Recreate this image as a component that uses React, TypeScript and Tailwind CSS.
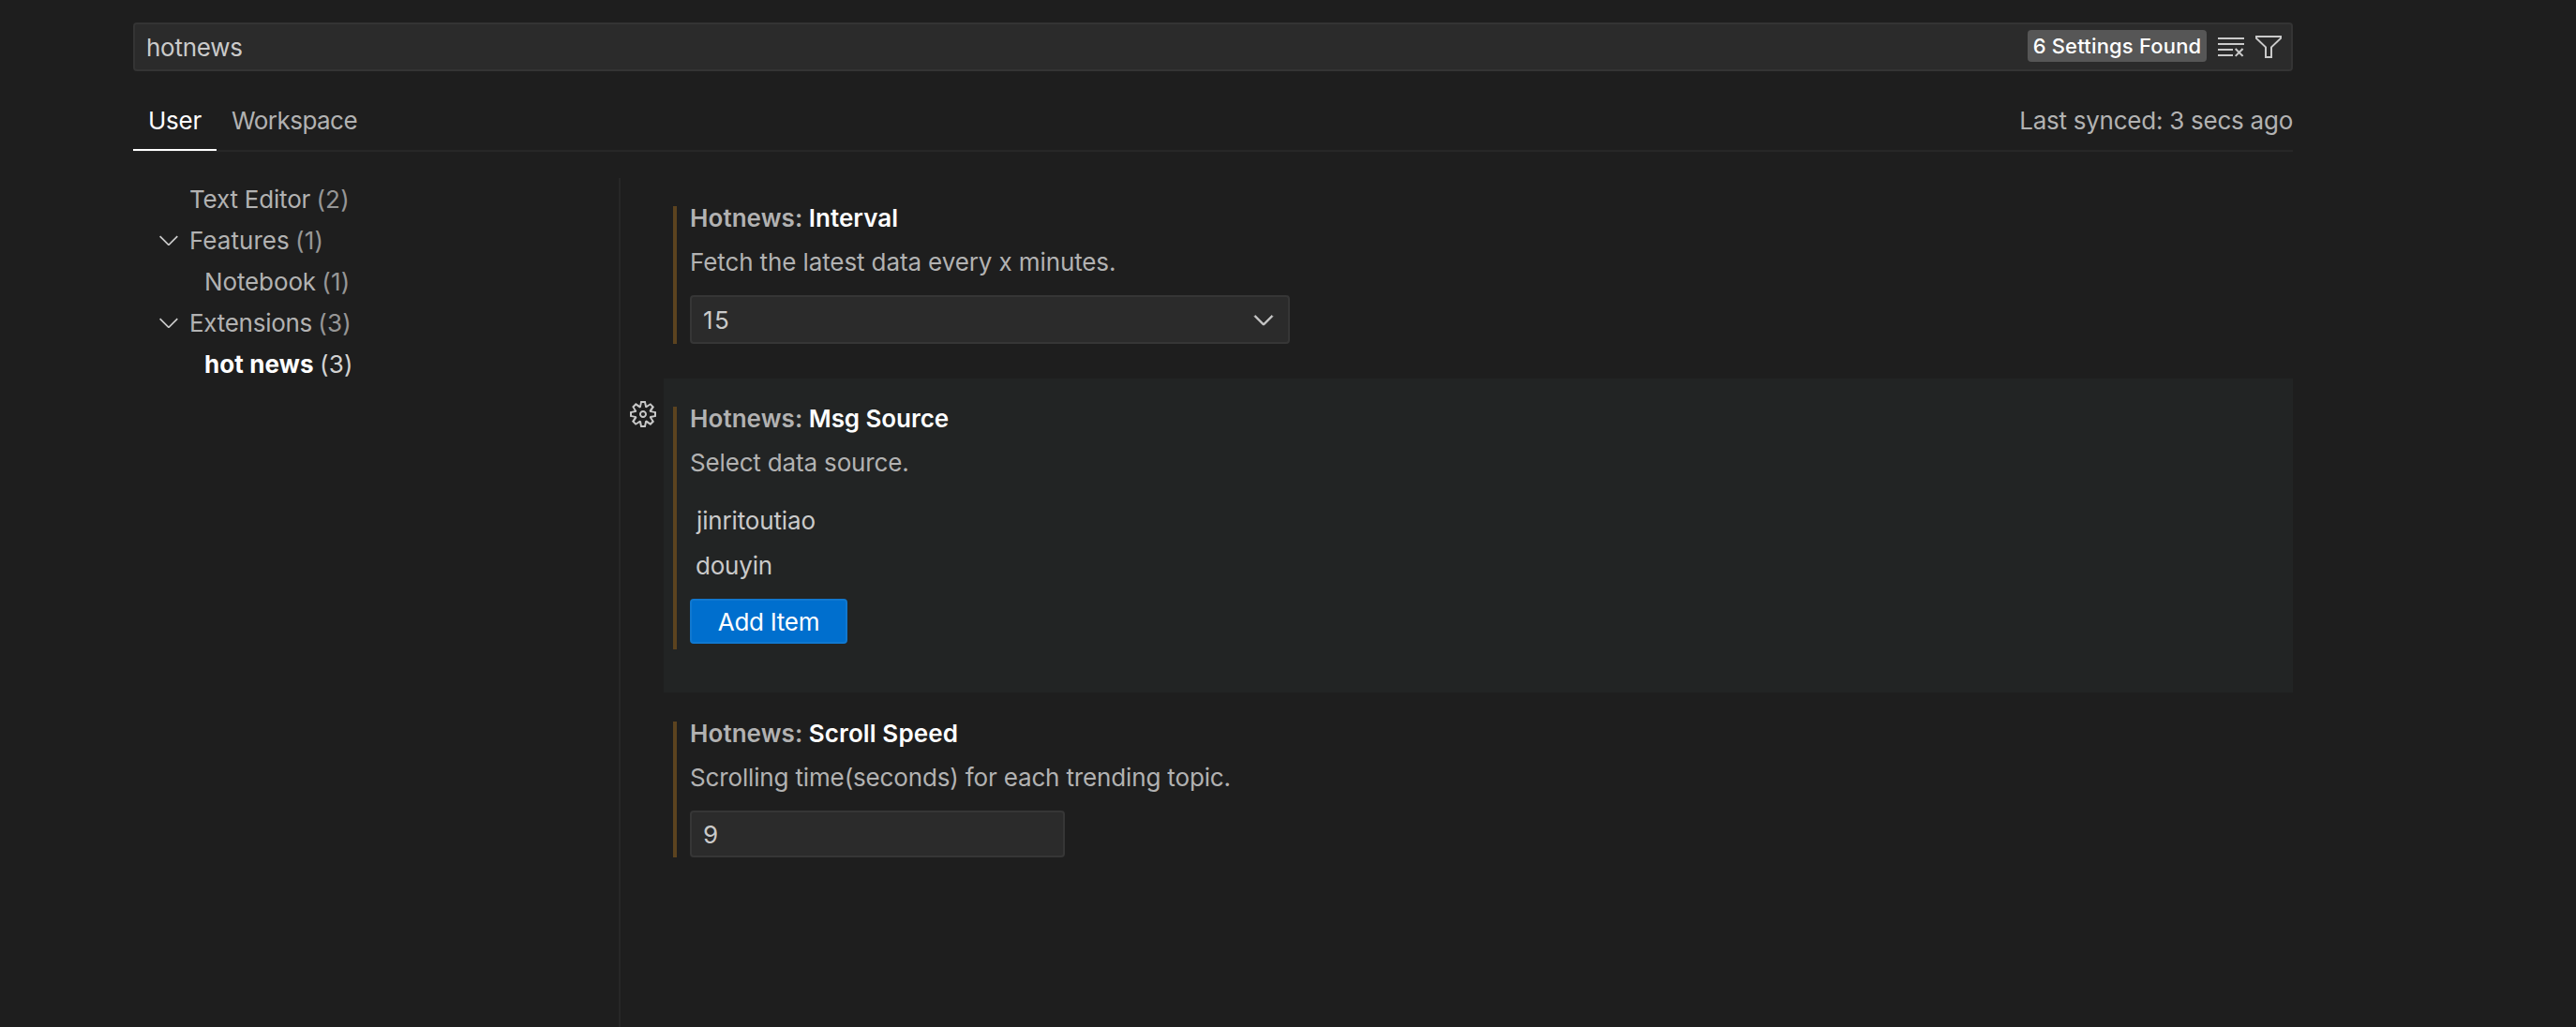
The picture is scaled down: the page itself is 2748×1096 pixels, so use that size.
import type { ReactNode } from "react";

function Icon({ d, className = "" }: { d: string; className?: string }) {
  return (
    <svg viewBox="0 0 16 16" className={`block size-8 shrink-0 ${className}`} fill="currentColor" fillRule="evenodd" clipRule="evenodd">
      <path d={d} />
    </svg>
  );
}

const CHEVRON = "M7.976 10.072l4.357-4.357.62.618L8.284 11h-.618L3 6.333l.619-.618 4.357 4.357z";
const CLEAR_ALL =
  "M10 12.6l.7.7 1.6-1.6 1.6 1.6.8-.7L13 11l1.7-1.6-.8-.8-1.6 1.7-1.6-1.7-.7.8 1.6 1.6-1.6 1.6zM1 4h14V3H1v1zm0 3h14V6H1v1zm8 2.5V9H1v1h8v-.5zM9 13v-1H1v1h8z";
const FILTER = "M15 2v1.67l-5 4.759V14H6V8.429l-5-4.76V2h14zM7 8v5h2V8l5-4.76V3H2v.24L7 8z";
const GEAR =
  "M9.1 4.4L8.6 2H7.4l-.5 2.4-.7.3-2-1.3-.9.8 1.3 2-.2.7-2.4.5v1.2l2.4.5.3.8-1.3 2 .8.8 2-1.3.8.3.4 2.3h1.2l.5-2.4.8-.3 2 1.3.8-.8-1.3-2 .3-.8 2.3-.4V7.4l-2.4-.5-.3-.8 1.3-2-.8-.8-2 1.3-.7-.2zM9.4 1l.5 2.4L12 2.1l2 2-1.4 2.1 2.4.4v2.8l-2.4.5L14 12l-2 2-2.1-1.4-.5 2.4H6.6l-.5-2.4L4 13.9l-2-2 1.4-2.1L1 9.4V6.6l2.4-.5L2.1 4l2-2 2.1 1.4.4-2.4h2.8zm.6 7c0 1.1-.9 2-2 2s-2-.9-2-2 .9-2 2-2 2 .9 2 2zM8 9c.6 0 1-.4 1-1s-.4-1-1-1-1 .4-1 1 .4 1 1 1z";

const tree = [
  { label: "Text Editor", count: 2, tracking: "tracking-[-0.2px]", indent: "pl-[60px]", open: false, active: false },
  { label: "Features", count: 1, tracking: "tracking-[0.04px]", indent: "pl-[22px]", open: true, active: false },
  { label: "Notebook", count: 1, tracking: "tracking-[-0.12px]", indent: "pl-[76px]", open: false, active: false },
  { label: "Extensions", count: 3, tracking: "tracking-[-0.28px]", indent: "pl-[22px]", open: true, active: false },
  { label: "hot news", count: 3, tracking: "tracking-[0.11px]", indent: "pl-[76px]", open: false, active: true },
];

function Setting({
  name,
  nameTracking,
  description,
  tracking,
  height,
  focused = false,
  children,
}: {
  name: string;
  nameTracking: string;
  description: string;
  tracking: string;
  height: string;
  focused?: boolean;
  children: ReactNode;
}) {
  return (
    <div className={`flex ${height}`}>
      <div className="w-[46px] shrink-0 pl-2 pt-[22px] text-[#c8c8c8]">{focused && <Icon d={GEAR} />}</div>
      <div className={`flex grow items-start pl-[10px] pt-[30px] ${focused ? "bg-[#222424]" : ""}`}>
        <div className="flex border-l-4 border-[#5c431f] pl-[14px]">
          <div className="flex flex-col items-start">
            <h3 className="flex gap-[6.4px] font-semibold leading-[26px] text-white">
              <span className="tracking-[0.08px] text-[#b2b2b2]">Hotnews:</span>
              <span className={nameTracking}>{name}</span>
            </h3>
            <p className={`mt-[21px] leading-[26px] text-[#b2b2b2] ${tracking}`}>{description}</p>
            {children}
          </div>
        </div>
      </div>
    </div>
  );
}

export default function App() {
  return (
    <div className="h-[1096px] w-[2748px] overflow-hidden whitespace-nowrap bg-[#1e1e1e] pl-[142px] pt-6 font-['Inter',sans-serif] text-[26px] text-[#cacaca]">
      <div className="flex h-full w-[2304px] flex-col">
        <div className="flex h-[52px] shrink-0 items-center rounded-[4px] border-2 border-[#343434] bg-[#2b2b2b] pl-3 pr-2">
          <span className="grow pt-[2px] leading-[50px] tracking-[-0.26px]">hotnews</span>
          <span className="-mt-0.5 h-[34px] w-[191px] rounded-[4px] bg-[#565656] text-center text-[22px] font-medium leading-[34px] tracking-[0.18px] text-white">
            6 Settings Found
          </span>
          <Icon d={CLEAR_ALL} className="ml-[10px]" />
          <Icon d={FILTER} className="ml-2" />
        </div>

        <div className="mt-[22px] flex h-16 shrink-0 border-b-2 border-[#272727] leading-[62px] text-[#b2b2b2]">
          <div className="h-[63px] w-[89px] border-b-2 border-white pl-4 tracking-[-0.24px] text-white">User</div>
          <div className="pl-4 tracking-[-0.54px]">Workspace</div>
          <div className="ml-auto tracking-[-0.25px]">Last synced: 3 secs ago</div>
        </div>

        <div className="mt-7 flex grow">
          <div className="w-[518px] shrink-0 pt-px">
            {tree.map((t) => (
              <div key={t.label} className={`flex h-11 items-center leading-[44px] ${t.indent} ${t.active ? "text-white" : "text-[#b2b2b2]"}`}>
                {t.open && <Icon d={CHEVRON} className="-mt-0.5 mr-1.5 text-[#cacaca]" />}
                <span className={`${t.tracking} ${t.active ? "font-bold" : ""}`}>{t.label}</span>
                <span className={`ml-[6.3px] tracking-[0.2px] ${t.active ? "text-[#d2d2d2]" : "text-[#969696]"}`}>({t.count})</span>
              </div>
            ))}
          </div>

          <div className="grow border-l-2 border-[#272727]">
            <Setting name="Interval" nameTracking="tracking-[0.06px]" description="Fetch the latest data every x minutes." tracking="tracking-[-0.11px]" height="h-[214px]">
              <div className="mt-[22px] flex h-[52px] w-[640px] items-center justify-between rounded-[4px] border-2 border-[#363636] bg-[#2b2b2b] pl-[12px] pr-[10px] leading-[50px]">
                <span className="pt-[2px] tracking-[1.5px]">15</span>
                <Icon d={CHEVRON} className="stroke-current stroke-[0.35]" />
              </div>
            </Setting>
            <Setting name="Msg Source" nameTracking="tracking-[-0.07px]" description="Select data source." tracking="tracking-[-0.16px]" height="h-[335px]" focused>
              <ul className="mt-[25px] pl-1.5 leading-[48px]">
                <li className="pl-px tracking-[-0.15px]">jinritoutiao</li>
                <li className="tracking-[-0.21px]">douyin</li>
              </ul>
              <button className="mb-1.5 mt-[11px] h-12 w-[168px] rounded-[4px] border-2 border-[#1078d0] bg-[#006fce] pt-px leading-[43px] tracking-[-0.27px] text-white">
                Add Item
              </button>
            </Setting>
            <div className="mt-px">
              <Setting name="Scroll Speed" nameTracking="tracking-[0.12px]" description="Scrolling time(seconds) for each trending topic." tracking="tracking-[-0.15px]" height="h-[212px]">
                <div className="mt-[22px] h-[50px] w-[400px] rounded-[4px] border-2 border-[#363636] bg-[#2b2b2b] pl-3 leading-[47px]">9</div>
              </Setting>
            </div>
          </div>
        </div>
      </div>
    </div>
  );
}
